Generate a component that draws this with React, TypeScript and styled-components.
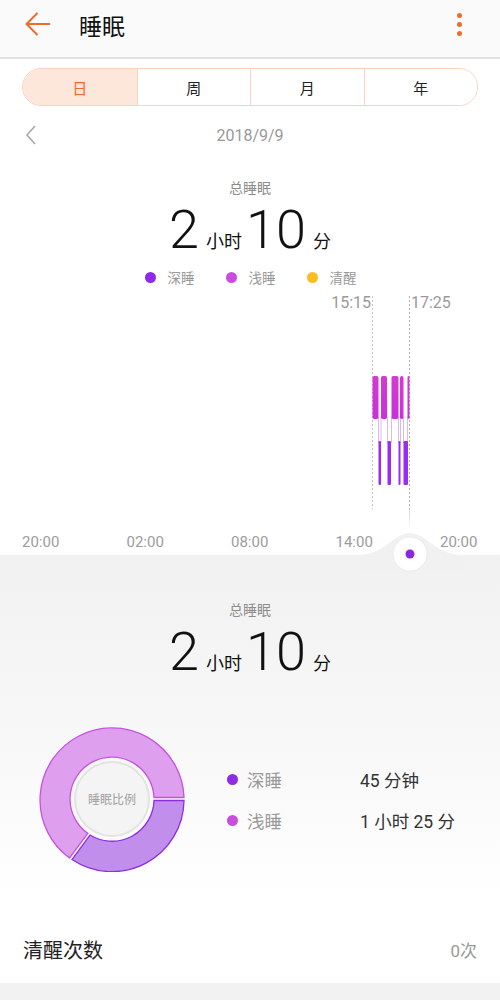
import React from "react";
import styled, { createGlobalStyle } from "styled-components";

const GlobalStyle = createGlobalStyle`
  html, body {
    margin: 0;
    padding: 0;
    background: #ffffff;
    font-family: "Roboto", "Noto Sans CJK SC", sans-serif;
  }
`;

const ORANGE = "#f26a2b";
const DEEP = "#8f2ae6";
const LIGHT = "#c94ee0";
const AWAKE = "#fbbd1f";

const tabs = ["日", "周", "月", "年"];
const axis = ["20:00", "02:00", "08:00", "14:00", "20:00"];

// sleep stages, page x coords of the bars in the day chart
const lightBars = [
  [372.5, 378.5],
  [381, 387],
  [391.5, 398.5],
  [400, 403.5],
  [407.5, 409.5],
];
const deepBars = [
  [378.5, 381],
  [387.5, 391],
  [398.5, 400.5],
  [403.5, 408],
];
const connectors = [378.5, 381, 387.5, 391.5, 398.5, 400.5, 403.5, 407.5];

export default function App() {
  return (
    <Page>
      <GlobalStyle />
      <Header>
        <IconButton aria-label="back">
          <svg width="28" height="28" viewBox="0 0 28 28">
            <path
              d="M26 13 H3 M13.5 2 L2.5 13 L13.5 24"
              fill="none"
              stroke={ORANGE}
              strokeWidth="2"
            />
          </svg>
        </IconButton>
        <Title>睡眠</Title>
        <MenuDots>
          <i />
          <i />
          <i />
        </MenuDots>
      </Header>

      <TabsWrap>
        <Tabs>
          {tabs.map((t, i) => (
            <Tab key={t} $active={i === 0}>
              {t}
            </Tab>
          ))}
        </Tabs>
      </TabsWrap>

      <DateRow>
        <PrevButton aria-label="previous">
          <svg width="12" height="20" viewBox="0 0 12 20">
            <path d="M10 1 L2 10 L10 19" fill="none" stroke="#a8a8a8" strokeWidth="1.6" />
          </svg>
        </PrevButton>
        <DateText>2018/9/9</DateText>
      </DateRow>

      <Summary $top={13}>
        <SummaryLabel>总睡眠</SummaryLabel>
        <BigValue>
          <Num>2</Num>
          <Unit>小时</Unit>
          <Num>10</Num>
          <Unit>分</Unit>
        </BigValue>
      </Summary>

      <Legend>
        <LegendItem>
          <Dot $color={DEEP} />
          深睡
        </LegendItem>
        <LegendItem>
          <Dot $color={LIGHT} />
          浅睡
        </LegendItem>
        <LegendItem>
          <Dot $color={AWAKE} />
          清醒
        </LegendItem>
      </Legend>

      <Chart width="500" height="238" viewBox="0 290 500 238">
        <defs>
          <linearGradient id="lightGrad" x1="0" y1="0" x2="0" y2="1">
            <stop offset="0" stopColor="#d43bd0" />
            <stop offset="1" stopColor="#c930dc" />
          </linearGradient>
          <linearGradient id="fadeLine" x1="0" y1="0" x2="0" y2="1">
            <stop offset="0" stopColor="#d9d0e6" />
            <stop offset="1" stopColor="#ffffff" />
          </linearGradient>
        </defs>
        <text x="371" y="307" textAnchor="end" fontSize="16" fill="#9a9a9a" fontFamily="Roboto">
          15:15
        </text>
        <text x="411" y="307" fontSize="16" fill="#9a9a9a" fontFamily="Roboto">
          17:25
        </text>
        <line x1="372.5" y1="295" x2="372.5" y2="508" stroke="#c4c4c4" strokeDasharray="2 2" />
        <line x1="409.5" y1="295" x2="409.5" y2="508" stroke="#b9a6d6" strokeDasharray="2 2" />
        <rect x="409" y="508" width="1" height="20" fill="url(#fadeLine)" />
        {connectors.map((x) => (
          <line key={x} x1={x} y1="416" x2={x} y2="442" stroke="#dcbaf0" strokeWidth="1" />
        ))}
        {lightBars.map(([a, b]) => (
          <rect key={a} x={a} y="375" width={b - a} height="43" rx="1.8" fill="url(#lightGrad)" />
        ))}
        {deepBars.map(([a, b]) => (
          <rect key={a} x={a} y="440" width={b - a} height="44" rx="1.2" fill="#982df0" />
        ))}
      </Chart>

      <AxisRow>
        {axis.map((t, i) => (
          <AxisLabel key={i}>{t}</AxisLabel>
        ))}
      </AxisRow>

      <Detail>
        <Hump width="104" height="42" viewBox="0 0 104 42">
          <path d="M0 24 C26 24 36 2 52 2 C68 2 78 24 104 24 V42 H0 Z" fill="#f1f1f1" />
          <circle cx="52" cy="23" r="17" fill="#ffffff" stroke="#ececec" strokeWidth="1" />
          <circle cx="52" cy="23" r="4.5" fill="#8a27e2" />
        </Hump>

        <Summary $top={44}>
          <SummaryLabel>总睡眠</SummaryLabel>
          <BigValue>
            <Num>2</Num>
            <Unit>小时</Unit>
            <Num>10</Num>
            <Unit>分</Unit>
          </BigValue>
        </Summary>

        <RatioBlock>
          <Donut width="146" height="146" viewBox="-73 -73 146 146">
            {/* light sleep 65%, deep sleep 35% from 3 o'clock clockwise */}
            <path
              d="M-42.5 59.0 A72 72 0 1 1 72 -1.5 L42 -1.5 A42 42 0 1 0 -24.2 34.4 Z"
              fill="#dea0ee"
              stroke="#c653df"
              strokeWidth="1.3"
            />
            <path
              d="M72 1.5 A72 72 0 0 1 -40.0 60.5 L-22.0 36.0 A42 42 0 0 0 42 1.5 Z"
              fill="#c18eec"
              stroke="#8e2ee0"
              strokeWidth="1.3"
            />
            <circle r="37" fill="#f4f4f4" stroke="#e3e3e3" strokeWidth="2" />
            <text y="4.5" textAnchor="middle" fontSize="12" fill="#a0a0a0" fontFamily="Noto Sans CJK SC">
              睡眠比例
            </text>
          </Donut>
          <StageList>
            <StageRow>
              <Dot $color={DEEP} />
              <StageName>深睡</StageName>
              <StageValue>45 分钟</StageValue>
            </StageRow>
            <StageRow>
              <Dot $color={LIGHT} />
              <StageName>浅睡</StageName>
              <StageValue>1 小时 25 分</StageValue>
            </StageRow>
          </StageList>
        </RatioBlock>

        <AwakeRow>
          <AwakeLabel>清醒次数</AwakeLabel>
          <AwakeValue>0次</AwakeValue>
        </AwakeRow>
      </Detail>
      <Footer />
    </Page>
  );
}

const Page = styled.div`
  width: 500px;
  height: 1000px;
  overflow: hidden;
  background: #ffffff;
`;

const Header = styled.header`
  display: flex;
  align-items: center;
  padding: 0 24px 7px 24px;
  background: #fafafa;
  border-bottom: 2px solid #e3e3e3;
  height: 50px;
`;

const IconButton = styled.div`
  width: 28px;
  height: 28px;
  display: flex;
`;

const Title = styled.h1`
  margin: 0 0 0 27px;
  font-size: 23px;
  font-weight: 400;
  color: #111;
  font-family: "Noto Sans CJK SC", sans-serif;
  flex: 1;
`;

const MenuDots = styled.div`
  display: flex;
  flex-direction: column;
  gap: 4px;
  margin-right: 14px;
  margin-top: -2px;

  i {
    display: block;
    width: 5px;
    height: 5px;
    border-radius: 50%;
    background: ${ORANGE};
  }
`;

const TabsWrap = styled.div`
  padding: 9px 22px 0;
`;

const Tabs = styled.div`
  height: 36px;
  display: grid;
  grid-template-columns: repeat(4, 1fr);
  border: 1px solid #fbd2bd;
  border-radius: 19px;
  overflow: hidden;
`;

const Tab = styled.div<{ $active?: boolean }>`
  display: flex;
  align-items: center;
  justify-content: center;
  font-size: 15px;
  font-family: "Noto Sans CJK SC", sans-serif;
  color: ${(p) => (p.$active ? ORANGE : "#222")};
  background: ${(p) => (p.$active ? "#fde6da" : "#fff")};
  & + & {
    border-left: 1px solid #fbd2bd;
  }
`;

const DateRow = styled.div`
  height: 58px;
  position: relative;
  display: flex;
  align-items: center;
  justify-content: center;
`;

const PrevButton = styled.div`
  position: absolute;
  left: 25px;
  top: 19px;
  display: flex;
`;

const DateText = styled.span`
  font-size: 16px;
  color: #999;
`;

const Summary = styled.div<{ $top: number }>`
  padding-top: ${(p) => p.$top}px;
  display: flex;
  flex-direction: column;
  align-items: center;
`;

const SummaryLabel = styled.div`
  font-size: 14px;
  line-height: 20px;
  color: #8c8c8c;
  font-family: "Noto Sans CJK SC", sans-serif;
`;

const BigValue = styled.div`
  margin-top: 6px;
  display: flex;
  align-items: baseline;
  color: #111;
  padding-left: 4px;
`;

const Num = styled.span`
  font-size: 54px;
  line-height: 54px;
  font-weight: 300;
`;

const Unit = styled.span`
  font-size: 18px;
  line-height: 1;
  margin: 0 4px 0 7px;
  font-family: "Noto Sans CJK SC", sans-serif;
`;

const Legend = styled.div`
  margin-top: 10px;
  display: flex;
  justify-content: center;
  gap: 31px;
  padding-left: 1px;
`;

const LegendItem = styled.div`
  display: flex;
  align-items: center;
  gap: 12px;
  font-size: 13.5px;
  line-height: 20px;
  color: #999;
  font-family: "Noto Sans CJK SC", sans-serif;
`;

const Dot = styled.span<{ $color: string }>`
  width: 11px;
  height: 11px;
  border-radius: 50%;
  background: ${(p) => p.$color};
  flex: none;
`;

const Chart = styled.svg`
  display: block;
  margin-top: 4px;
`;

const AxisRow = styled.div`
  height: 26px;
  padding: 0 22px;
  display: flex;
  justify-content: space-between;
  align-items: center;
`;

const AxisLabel = styled.span`
  font-size: 15px;
  color: #9c9c9c;
  width: 38px;
`;

const Detail = styled.section`
  position: relative;
  height: 428px;
  background: linear-gradient(#f1f1f1 0%, #f8f8f8 45%, #ffffff 82%);
`;

const Hump = styled.svg`
  position: absolute;
  left: 358px;
  top: -24px;
`;

const RatioBlock = styled.div`
  margin-top: 47px;
  display: flex;
  align-items: center;
  padding-left: 39px;
`;

const Donut = styled.svg`
  display: block;
  flex: none;
`;

const StageList = styled.div`
  margin-left: 42px;
  display: flex;
  flex-direction: column;
  gap: 17px;
  margin-top: 2px;
`;

const StageRow = styled.div`
  display: flex;
  align-items: center;
  height: 24px;
`;

const StageName = styled.span`
  margin-left: 9px;
  width: 113px;
  font-size: 17.5px;
  color: #999;
  font-family: "Noto Sans CJK SC", sans-serif;
`;

const StageValue = styled.span`
  font-size: 17.5px;
  color: #333;
`;

const AwakeRow = styled.div`
  margin-top: 46px;
  height: 62px;
  padding: 0 23px;
  display: flex;
  align-items: center;
  justify-content: space-between;
`;

const AwakeLabel = styled.span`
  font-size: 20px;
  color: #222;
  font-family: "Noto Sans CJK SC", sans-serif;
`;

const AwakeValue = styled.span`
  font-size: 17px;
  color: #9a9a9a;
`;

const Footer = styled.div`
  height: 18px;
  background: #f2f2f2;
`;
